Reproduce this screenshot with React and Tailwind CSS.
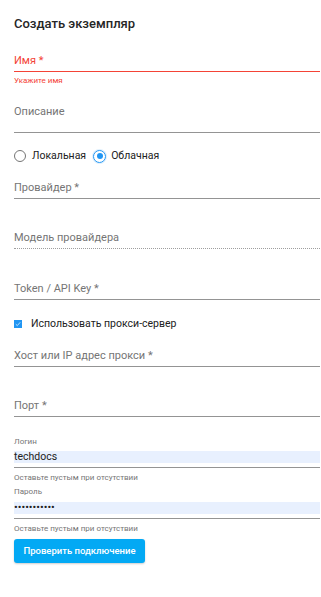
import React from "react";

function Field({ label, h, dotted, red, pb = "pb-[3px]" }) {
  return (
    <div
      className={`flex items-end border-b ${pb} ${
        dotted ? "border-dotted border-[#9e9e9e]" : red ? "border-[#f44336]" : "border-[#949494]"
      } ${h}`}
    >
      <span className={`text-[11px] leading-[14px] ${red ? "text-[#f44336]" : "text-[#757575]"}`}>{label}</span>
    </div>
  );
}

export default function App() {
  return (
    <div
      className="w-[321px] h-[597px] bg-white pl-[14px] pr-[1px] overflow-hidden"
      style={{ fontFamily: "Roboto, 'Noto Sans', sans-serif" }}
    >
      <div className="pt-[16px] text-[13px] leading-[16px] font-medium text-[#262626]">Создать экземпляр</div>

      <Field label="Имя *" h="h-[40px]" red />
      <div className="mt-[4px] text-[8px] leading-[10px] text-[#f44336]">Укажите имя</div>

      <Field label="Описание" h="h-[47px]" pb="pb-[13px]" />

      <div className="mt-[16px] h-[14px] flex items-center text-[10.5px] text-[#212121]">
        <span className="w-[12px] h-[12px] rounded-full border border-[#757575] mr-[6px]" />
        <span>Локальная</span>
        <span className="ml-[7px] w-[13px] h-[13px] rounded-full border border-[#2196f3] flex items-center justify-center mr-[5px] shadow-[0_0_0_1px_rgba(33,150,243,0.15)]">
          <span className="w-[6px] h-[6px] rounded-full bg-[#2196f3]" />
        </span>
        <span>Облачная</span>
      </div>

      <Field label="Провайдер *" h="h-[36px]" />
      <Field label="Модель провайдера" h="h-[50px]" dotted />
      <Field label="Token / API Key *" h="h-[51px]" />

      <div className="mt-[17px] h-[14px] flex items-center text-[10.5px] text-[#212121]">
        <span className="w-[8px] h-[8px] bg-[#2196f3] flex items-center justify-center mr-[9px]">
          <svg width="6" height="6" viewBox="0 0 6 6" fill="none">
            <path d="M0.8 3.2 L2.3 4.6 L5.2 1.3" stroke="white" strokeWidth="0.7" />
          </svg>
        </span>
        <span>Использовать прокси-сервер</span>
      </div>

      <Field label="Хост или IP адрес прокси *" h="h-[36px]" />
      <Field label="Порт *" h="h-[50px]" />

      <div className="mt-[20px] text-[8px] leading-[10px] text-[#757575]">Логин</div>
      <div className="mt-[4px] pb-[4px] border-b border-[#949494]">
        <div className="h-[12px] bg-[#e8f0fe] text-[10.5px] leading-[12px] text-[#212121] flex items-center">techdocs</div>
      </div>
      <div className="mt-[5px] text-[8px] leading-[10px] text-[#757575]">Оставьте пустым при отсутствии</div>

      <div className="mt-[4px] text-[8px] leading-[10px] text-[#757575]">Пароль</div>
      <div className="mt-[5px] pb-[4px] border-b border-[#949494]">
        <div className="h-[12px] bg-[#e8f0fe] text-[11px] leading-[12px] text-[#212121] flex items-center">•••••••••••</div>
      </div>
      <div className="mt-[5px] text-[8px] leading-[10px] text-[#757575]">Оставьте пустым при отсутствии</div>

      <button className="mt-[5px] w-[131px] h-[24px] bg-[#03a9f4] rounded-[3px] text-white text-[9.5px] font-medium flex items-center justify-center shadow-[0_1px_2px_rgba(0,0,0,0.2)]">
        Проверить подключение
      </button>
    </div>
  );
}
